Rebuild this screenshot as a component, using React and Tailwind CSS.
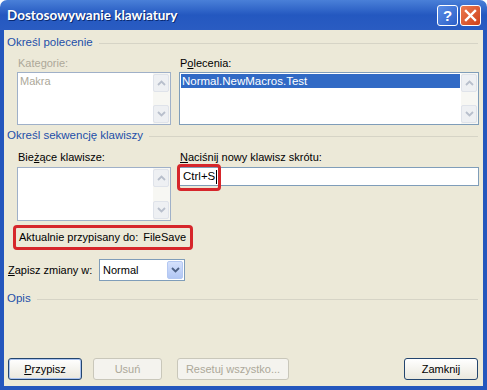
import React from 'react';

const font = { fontFamily: '"Liberation Sans", Arial, sans-serif' };

function Chevron({ up, color = '#b8bfcc' }) {
  return (
    <svg width="9" height="6" viewBox="0 0 9 6">
      <path
        d={up ? 'M1 5 L4.5 1.5 L8 5' : 'M1 1 L4.5 4.5 L8 1'}
        fill="none"
        stroke={color}
        strokeWidth="1.8"
      />
    </svg>
  );
}

function ScrollBar() {
  return (
    <div className="flex w-[17px] flex-col justify-between bg-[#f7f7f3] py-[1px] pr-[1px]">
      <div className="flex h-[18px] items-center justify-center rounded-[2px] border border-[#dfe3ea] bg-[#eef0f3]">
        <Chevron up />
      </div>
      <div className="flex h-[18px] items-center justify-center rounded-[2px] border border-[#dfe3ea] bg-[#eef0f3]">
        <Chevron />
      </div>
    </div>
  );
}

function GroupHeader({ label, className = '' }) {
  return (
    <div className={`flex h-[14px] items-center pl-[3px] pr-[5px] ${className}`}>
      <span className="whitespace-nowrap text-[11.5px] leading-none text-[#1d4fa8]">{label}</span>
      <div className="ml-[6px] h-px flex-1 bg-[#d6d4c6]" />
    </div>
  );
}

function Button({ children, disabled, isDefault, className = '' }) {
  const base = 'flex h-[22px] items-center justify-center rounded-[3px] text-[11px] leading-none whitespace-nowrap';
  if (disabled)
    return (
      <div className={`${base} border border-[#c9c7ba] bg-[#f4f3ee] text-[#aca899] ${className}`}>{children}</div>
    );
  return (
    <div
      className={`${base} border border-[#23456e] bg-gradient-to-b from-[#ffffff] to-[#eae8dd] text-black ${
        isDefault ? 'shadow-[inset_0_0_0_1px_#a8c2f0]' : ''
      } ${className}`}
    >
      {children}
    </div>
  );
}

export default function App() {
  return (
    <div className="flex h-[390px] w-[487px] flex-col bg-white text-[11px]" style={font}>
      {/* title bar */}
      <div className="flex h-[30px] items-center rounded-t-[7px] bg-gradient-to-b from-[#4a80d8] via-[#2458c0] to-[#2a5cc2] pl-[7px] pr-[6px]">
        <span
          className="flex-1 text-[13.5px] font-bold text-white [text-shadow:1px_1px_0_#0a2a70]"
          style={{ fontFamily: 'Lato, "Liberation Sans", sans-serif' }}
        >
          Dostosowywanie klawiatury
        </span>
        <div className="flex h-[21px] w-[21px] items-center justify-center rounded-[3px] border border-white bg-gradient-to-br from-[#5b8ee6] to-[#2d5fc8] text-[15px] font-bold leading-none text-white">
          ?
        </div>
        <div className="ml-[2px] flex h-[21px] w-[21px] items-center justify-center rounded-[3px] border border-white bg-gradient-to-br from-[#eb7a4f] to-[#cf3f17]">
          <svg width="13" height="13" viewBox="0 0 13 13">
            <path d="M2 2 L11 11 M11 2 L2 11" stroke="white" strokeWidth="2.4" strokeLinecap="square" />
          </svg>
        </div>
      </div>

      {/* client */}
      <div className="flex flex-1 flex-col border-x-4 border-b-4 border-[#2456bd] bg-[#ece9d8] pt-[6px] pb-[6px]">
        <GroupHeader label="Określ polecenie" />

        <div className="mt-[6px] flex leading-[14px]">
          <div className="ml-[14px] w-[162px] text-[#aca899]">Kategorie:</div>
          <div>
            P<span className="underline">o</span>lecenia:
          </div>
        </div>

        <div className="mt-[2px] flex h-[53px] pr-[4px]">
          <div className="ml-[13px] flex w-[154px] border border-[#9fb0c8] bg-white">
            <div className="flex-1 pl-[2px] pt-[1px] leading-[14px] text-[#aca899]">Makra</div>
            <ScrollBar />
          </div>
          <div className="ml-[8px] flex flex-1 border border-[#7f9db9] bg-white">
            <div className="flex-1 p-[1px]">
              <div className="h-[14px] bg-[#316ac5] pl-[1px] text-[11.5px] leading-[14px] text-white">
                Normal.NewMacros.Test
              </div>
            </div>
            <ScrollBar />
          </div>
        </div>

        <GroupHeader label="Określ sekwencję klawiszy" className="mt-[4px]" />

        <div className="mt-[7px] flex leading-[14px]">
          <div className="ml-[14px] w-[162px]">
            Bie<span className="underline">ż</span>ące klawisze:
          </div>
          <div>
            <span className="underline">N</span>aciśnij nowy klawisz skrótu:
          </div>
        </div>

        <div className="mt-[3px] flex h-[54px] pr-[4px]">
          <div className="ml-[13px] flex w-[154px] border border-[#9fb0c8] bg-white">
            <div className="flex-1" />
            <ScrollBar />
          </div>
          <div className="ml-[8px] flex-1">
            <div className="relative flex h-[19px] items-center border border-[#7f9db9] bg-white pl-[3px] text-[11.5px]">
              <span>Ctrl+S</span>
              <span className="ml-px h-[14px] w-px bg-black" />
              <div className="absolute -left-[3px] -top-[4px] h-[27px] w-[44px] rounded-[4px] border-[3px] border-[#d6262b]" />
            </div>
          </div>
        </div>

        <div className="ml-[9px] mt-[4px] flex h-[25px] w-[180px] items-center whitespace-nowrap rounded-[4px] border-[3px] border-[#d6262b] pl-[3px]">
          <span>Aktualnie przypisany do:</span>
          <span className="ml-[5px]">FileSave</span>
        </div>

        <div className="mt-[9px] flex h-[22px] items-center">
          <span className="ml-[4px] w-[91px] whitespace-nowrap">
            <span className="underline">Z</span>apisz zmiany w:
          </span>
          <div className="flex h-[22px] w-[86px] items-center border border-[#7f9db9] bg-white pr-px">
            <span className="flex-1 pl-[3px]">Normal</span>
            <div className="flex h-[18px] w-[16px] items-center justify-center rounded-[2px] border border-[#b4c8f2] bg-gradient-to-b from-[#d5e1fc] to-[#b2c7f4]">
              <Chevron color="#4d6185" />
            </div>
          </div>
        </div>

        <GroupHeader label="Opis" className="mt-[11px]" />

        <div className="flex-1" />

        <div className="flex items-center pr-[5px]">
          <Button isDefault className="ml-[4px] w-[74px]">
            <span className="underline">P</span>rzypisz
          </Button>
          <Button disabled className="ml-[11px] w-[69px]">
            Usuń
          </Button>
          <Button disabled className="ml-[15px] w-[112px]">
            Resetuj wszystko...
          </Button>
          <div className="flex-1" />
          <Button className="w-[74px]">Zamknij</Button>
        </div>
      </div>
    </div>
  );
}
